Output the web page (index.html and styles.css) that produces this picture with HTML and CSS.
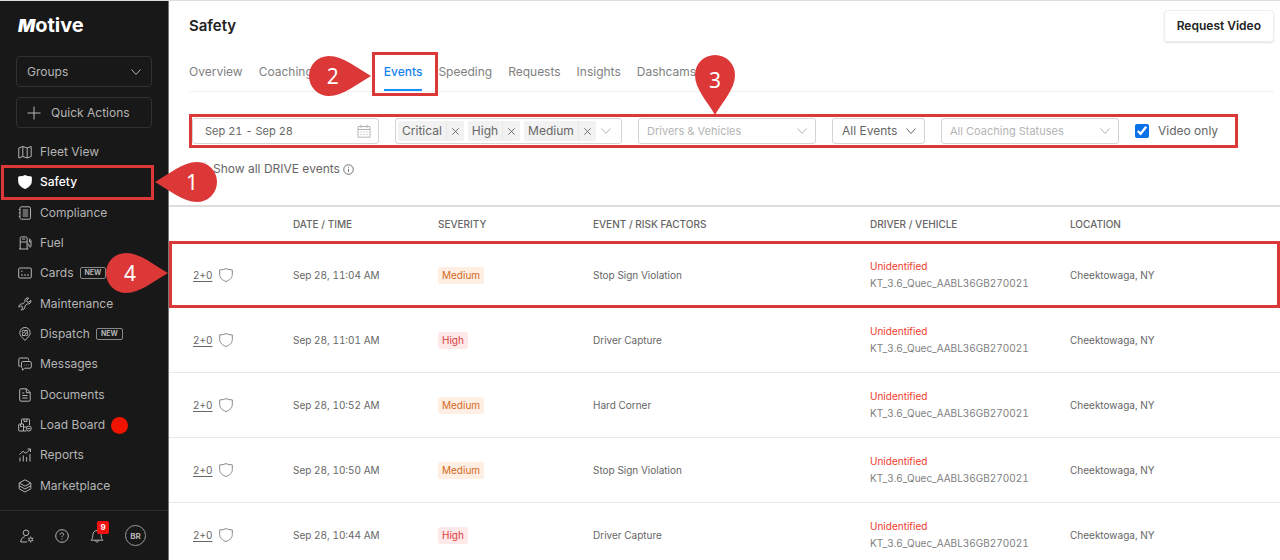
FILE: index.html
```html
<!DOCTYPE html>
<html lang="en">
<head>
    <meta charset="UTF-8">
    <meta name="viewport" content="width=device-width, initial-scale=1.0">
    <title>Safety - Events</title>
    <link rel="stylesheet" href="styles.css">
</head>
<body>
    <svg class="sprite" aria-hidden="true">
        <symbol id="chevron" viewBox="0 0 12 12"><path d="M1.5 3.5 6 8.5l4.5-5"/></symbol>
        <symbol id="close" viewBox="0 0 12 12"><path d="M2.5 2.5l7 7M9.5 2.5l-7 7"/></symbol>
        <symbol id="shield" viewBox="0 0 14 14"><path d="M7 .6C5.300 1.500 3.200 1.900.7 1.900v4.600c0 3.200 2.300 5.600 6.300 7 4-1.400 6.300-3.800 6.300-7V1.900C10.800 1.900 8.700 1.500 7 .6z"/></symbol>
        <symbol id="pointer" viewBox="0 0 62 40"><path d="M0 20C14 12 28 0 42 0a20 20 0 0 1 0 40C28 40 14 28 0 20z"/></symbol>
    </svg>

    <div class="app">
        <aside class="sidebar">
            <div class="logo"><span class="logo-m">M</span>otive</div>
            <div class="sidebar-actions">
                <div class="select-wrap">
                    <select class="side-control" aria-label="Groups"><option>Groups</option></select>
                    <svg class="icon chevron"><use href="#chevron"/></svg>
                </div>
                <button class="side-control quick-actions" type="button">
                    <svg class="icon" viewBox="0 0 14 14"><path d="M7 .5v13M.5 7h13"/></svg>
                    Quick Actions
                </button>
            </div>

            <nav class="nav">
                <div class="nav-item">
                    <a href="#"><svg class="icon" viewBox="0 0 14 14"><path d="M.8 3 4.800 1.500l4.400 1.500 4-1.500v10L9.200 13l-4.400-1.500-4 1.500zM4.800 1.500v10M9.200 3v10"/></svg>Fleet View</a>
                </div>
                <div class="nav-item active">
                    <a href="#"><svg class="icon filled"><use href="#shield"/></svg>Safety</a>
                    <span class="highlight"></span>
                    <span class="callout callout-left"><svg><use href="#pointer"/></svg><b>1</b></span>
                </div>
                <div class="nav-item">
                    <a href="#"><svg class="icon" viewBox="0 0 14 14"><rect x="2" y=".8" width="10.500" height="12.400" rx="1.500"/><path d="M4.700 4h5.500M4.700 6h5.500M4.700 8h5.500M4.700 10h5.500M.8 3.500H2M.8 7H2M.8 10.500H2"/></svg>Compliance</a>
                </div>
                <div class="nav-item">
                    <a href="#"><svg class="icon" viewBox="0 0 14 14"><path d="M2.200 13V2.200c0-.8.500-1.300 1.300-1.300h4.300c.8 0 1.300.5 1.300 1.300V13M1 13h9.400M2.200 6h7M4 3h3.200M9.200 8h1c.6 0 .9.400.9.900v1.300c0 1.300 1.900 1.300 1.900 0V4.500L11 2.300M13 6h-1.500V3.500"/></svg>Fuel</a>
                </div>
                <div class="nav-item">
                    <a href="#"><svg class="icon" viewBox="0 0 14 14"><rect x=".7" y="2" width="12.600" height="10" rx="1"/><path d="M3 5.200h1.500M3 9h2M6 9h2M9 9h2"/></svg>Cards<span class="tag-new">NEW</span></a>
                    <span class="callout callout-right"><svg><use href="#pointer"/></svg><b>4</b></span>
                </div>
                <div class="nav-item">
                    <a href="#"><svg class="icon" viewBox="0 0 14 14"><path d="M12.900 3.300 10.800 5.200 9 4.900 8.700 3.200 10.700 1C8.400.4 6.300 2.200 6.900 4.700L4.700 7C2.500 6.300.6 8 .9 10.200L2.600 9l1.600.500.3 1.600-1.400 1.800c2.300.3 4.200-1.500 3.700-3.800L9.200 6.900c2.300.5 4.200-1.200 3.700-3.600z"/></svg>Maintenance</a>
                </div>
                <div class="nav-item">
                    <a href="#"><svg class="icon" viewBox="0 0 14 14"><path d="M7 13.400C4 10.600 1.800 8.300 1.800 5.700a5.200 5.200 0 0 1 10.400 0c0 2.600-2.200 4.900-5.200 7.700z"/><circle cx="5.500" cy="4.500" r="1.300"/><circle cx="8.600" cy="7.300" r="1.300"/><path d="M6.800 3.500h2.500v2.500M4.500 6.500v2h2.800"/></svg>Dispatch<span class="tag-new">NEW</span></a>
                </div>
                <div class="nav-item">
                    <a href="#"><svg class="icon" viewBox="0 0 14 14"><path d="M2.500 9.200H.8V2.300c0-.8.500-1.300 1.300-1.300h7.100c.8 0 1.300.5 1.300 1.300v1.200M4.800 4.500h7.200c.8 0 1.300.5 1.300 1.300v4.100c0 .8-.5 1.300-1.300 1.300H6.700l-2.300 2V11.200c-.6-.2-.9-.6-.9-1.300V5.800c0-.8.5-1.300 1.300-1.300zM6.500 8h.6M8.200 8h.6M9.900 8h.6"/></svg>Messages</a>
                </div>
                <div class="nav-item">
                    <a href="#"><svg class="icon" viewBox="0 0 14 14"><path d="M3 .8h5.500l3.700 3.700v7.400c0 .8-.5 1.300-1.300 1.300H3c-.8 0-1.300-.5-1.300-1.300V2.100C1.700 1.300 2.200.8 3 .8zM8.300.8v3.900h3.900M4.300 5h2M4.300 7.500h5.300M4.300 10h5.300"/></svg>Documents</a>
                </div>
                <div class="nav-item">
                    <a href="#"><svg class="icon" viewBox="0 0 14 14"><path d="M3.500 6V2c0-.7.300-1 1-1h6c.7 0 1 .3 1 1v5M6 1v2.500h3V1M.7 12.500V7c0-.6.300-1 1-1h3.800v7H1.200zM2.500 6v2.500h2M5.500 9h3M5.500 13h3"/><circle cx="10.800" cy="10.500" r="2.500"/><path d="M9.500 10.500h2.600"/></svg>Load Board<span class="dot"></span></a>
                </div>
                <div class="nav-item">
                    <a href="#"><svg class="icon" viewBox="0 0 14 14"><path d="M2 13.500V9.500M5.300 13.500V7.500M8.600 13.500V9M12 13.500V6M1.500 6.500 5 3.300l3 2L12.300 1.200M9.500 1h3v3"/></svg>Reports</a>
                </div>
                <div class="nav-item">
                    <a href="#"><svg class="icon" viewBox="0 0 14 14"><path d="M7 .8 12.800 4 7 7.200 1.200 4zM1.200 6.800 7 10l5.800-3.200M1.200 9.800 7 13l5.800-3.200M1.200 4v5.800M12.800 4v5.800"/></svg>Marketplace</a>
                </div>
            </nav>

            <div class="sidebar-footer">
                <button type="button" aria-label="Account settings"><svg class="icon" viewBox="0 0 14 14"><circle cx="6" cy="3.800" r="2.800"/><path d="M7 13H.8c0-3 1.500-4.800 4-5.200"/><circle cx="10.700" cy="10.500" r="1.600"/><path d="M10.700 7.500v1.400M10.700 12.100v1.400M8.100 9l1.200.7M12.100 11.300l1.200.7M8.100 12l1.200-.7M12.100 9.700l1.200-.7"/></svg></button>
                <button type="button" aria-label="Help"><svg class="icon" viewBox="0 0 14 14"><circle cx="7" cy="7" r="6.300"/><path d="M5.200 5.600C5.300 3.300 8.800 3.500 8.700 5.500 8.600 6.700 7 6.700 7 8.200M7 9.500v1"/></svg></button>
                <button type="button" aria-label="Notifications"><svg class="icon" viewBox="0 0 14 14"><path d="M1 11.200h12c-1.200-1.200-1.800-2-1.800-4.700C11.200 3.300 9.500 1.500 7 1.500S2.800 3.300 2.800 6.500c0 2.700-.6 3.500-1.800 4.700zM5.300 11.500c.2 2 3.200 2 3.400 0"/></svg><span class="badge">9</span></button>
                <button class="avatar" type="button">BR</button>
            </div>
        </aside>

        <main class="main">
            <div class="content">
                <header class="page-header">
                    <h1>Safety</h1>
                    <button class="btn" type="button">Request Video</button>
                </header>

                <nav class="tabs">
                    <a href="#">Overview</a>
                    <a href="#">Coaching</a>
                    <a href="#" class="current">Events<span class="highlight"></span><span class="callout callout-right"><svg><use href="#pointer"/></svg><b>2</b></span></a>
                    <a href="#">Speeding</a>
                    <a href="#">Requests</a>
                    <a href="#">Insights</a>
                    <a href="#">Dashcams</a>
                </nav>

                <form class="filters">
                    <div class="select-wrap date">
                        <input class="control" type="text" value="Sep 21 - Sep 28" aria-label="Date range">
                        <svg class="icon calendar" viewBox="0 0 14 14"><path d="M1 2.500h12v10.700H1zM1 5.500h12M4 .8v3M10 .8v3M3.500 8h1M6.500 8h1M9.500 8h1M3.500 10.500h1M6.500 10.500h1M9.500 10.500h1"/></svg>
                    </div>
                    <div class="control multi">
                        <span class="chip">Critical<button type="button" aria-label="Remove Critical"><svg class="icon"><use href="#close"/></svg></button></span>
                        <span class="chip">High<button type="button" aria-label="Remove High"><svg class="icon"><use href="#close"/></svg></button></span>
                        <span class="chip">Medium<button type="button" aria-label="Remove Medium"><svg class="icon"><use href="#close"/></svg></button></span>
                        <svg class="icon chevron"><use href="#chevron"/></svg>
                    </div>
                    <div class="select-wrap wide">
                        <select class="control placeholder" aria-label="Drivers and vehicles"><option>Drivers &amp; Vehicles</option></select>
                        <svg class="icon chevron"><use href="#chevron"/></svg>
                        <span class="callout callout-down"><svg viewBox="0 0 40 60"><path d="M20 60C12 46 0 34 0 20a20 20 0 0 1 40 0C40 34 28 46 20 60z"/></svg><b>3</b></span>
                    </div>
                    <div class="select-wrap narrow">
                        <select class="control" aria-label="Events"><option>All Events</option></select>
                        <svg class="icon chevron"><use href="#chevron"/></svg>
                    </div>
                    <div class="select-wrap wide">
                        <select class="control placeholder" aria-label="Coaching status"><option>All Coaching Statuses</option></select>
                        <svg class="icon chevron"><use href="#chevron"/></svg>
                    </div>
                    <label class="check"><input type="checkbox" checked>Video only</label>
                    <span class="highlight"></span>
                </form>

                <label class="check show-all"><input type="checkbox">Show all DRIVE events
                    <svg class="icon" viewBox="0 0 12 12"><circle cx="6" cy="6" r="5.200"/><path d="M6 5.300v3.500M6 3v1"/></svg>
                </label>
            </div>

            <table class="events">
                <colgroup>
                    <col class="col-media"><col class="col-date"><col class="col-severity"><col><col class="col-driver"><col class="col-location">
                </colgroup>
                <thead>
                    <tr><th></th><th>DATE / TIME</th><th>SEVERITY</th><th>EVENT / RISK FACTORS</th><th>DRIVER / VEHICLE</th><th>LOCATION</th></tr>
                </thead>
                <tbody>
                    <tr>
                        <td><div class="media"><a href="#">2+0</a><svg class="icon"><use href="#shield"/></svg></div><span class="highlight"></span></td>
                        <td>Sep 28, 11:04 AM</td>
                        <td><span class="severity medium">Medium</span></td>
                        <td>Stop Sign Violation</td>
                        <td><span class="unidentified">Unidentified</span><span class="vehicle">KT_3.6_Quec_AABL36GB270021</span></td>
                        <td>Cheektowaga, NY</td>
                    </tr>
                    <tr>
                        <td><div class="media"><a href="#">2+0</a><svg class="icon"><use href="#shield"/></svg></div></td>
                        <td>Sep 28, 11:01 AM</td>
                        <td><span class="severity high">High</span></td>
                        <td>Driver Capture</td>
                        <td><span class="unidentified">Unidentified</span><span class="vehicle">KT_3.6_Quec_AABL36GB270021</span></td>
                        <td>Cheektowaga, NY</td>
                    </tr>
                    <tr>
                        <td><div class="media"><a href="#">2+0</a><svg class="icon"><use href="#shield"/></svg></div></td>
                        <td>Sep 28, 10:52 AM</td>
                        <td><span class="severity medium">Medium</span></td>
                        <td>Hard Corner</td>
                        <td><span class="unidentified">Unidentified</span><span class="vehicle">KT_3.6_Quec_AABL36GB270021</span></td>
                        <td>Cheektowaga, NY</td>
                    </tr>
                    <tr>
                        <td><div class="media"><a href="#">2+0</a><svg class="icon"><use href="#shield"/></svg></div></td>
                        <td>Sep 28, 10:50 AM</td>
                        <td><span class="severity medium">Medium</span></td>
                        <td>Stop Sign Violation</td>
                        <td><span class="unidentified">Unidentified</span><span class="vehicle">KT_3.6_Quec_AABL36GB270021</span></td>
                        <td>Cheektowaga, NY</td>
                    </tr>
                    <tr>
                        <td><div class="media"><a href="#">2+0</a><svg class="icon"><use href="#shield"/></svg></div></td>
                        <td>Sep 28, 10:44 AM</td>
                        <td><span class="severity high">High</span></td>
                        <td>Driver Capture</td>
                        <td><span class="unidentified">Unidentified</span><span class="vehicle">KT_3.6_Quec_AABL36GB270021</span></td>
                        <td>Cheektowaga, NY</td>
                    </tr>
                </tbody>
            </table>
        </main>
    </div>
</body>
</html>
```

FILE: styles.css
```css
* {
    box-sizing: border-box;
}
body {
    font-family: Inter, "Liberation Sans", sans-serif;
    font-size: 12px;
    line-height: 20px;
    margin: 0;
    color: #666;
    background-color: #fff;
}
a {
    color: inherit;
    text-decoration: none;
}
button, input, select {
    font: inherit;
    color: inherit;
    margin: 0;
}
button {
    padding: 0;
    border: none;
    background: none;
    cursor: pointer;
}
.sprite {
    display: none;
}
.icon {
    width: 14px;
    height: 14px;
    flex: none;
    fill: none;
    stroke: currentColor;
    stroke-width: 1;
}
.icon.filled {
    fill: currentColor;
}
.app {
    display: flex;
    height: 100vh;
    border-top: 1px solid #ddd;
}

/* sidebar */
.sidebar {
    position: relative;
    z-index: 2;
    display: flex;
    flex-direction: column;
    flex: none;
    width: 169px;
    background-color: #181818;
    border-right: 1px solid #777;
    color: #b4b4b4;
}
.logo {
    padding: 12px 18px 0;
    font-size: 20px;
    line-height: 24px;
    font-weight: 700;
    color: #fff;
}
.logo-m {
    font-size: 18px;
    font-weight: 900;
    font-style: italic;
}
.sidebar-actions {
    display: flex;
    flex-direction: column;
    gap: 10px;
    padding: 18px 16px 9px;
}
.select-wrap {
    position: relative;
}
.select-wrap .icon {
    position: absolute;
    right: 8px;
    top: 50%;
    transform: translateY(-50%);
    pointer-events: none;
}
.chevron {
    width: 12px;
    height: 12px;
}
.side-control {
    display: flex;
    align-items: center;
    gap: 10px;
    width: 100%;
    height: 31px;
    padding: 0 10px;
    border: 1px solid #303030;
    border-radius: 4px;
    background-color: transparent;
    appearance: none;
}
.sidebar .select-wrap .chevron {
    right: 10px;
}
.nav {
    display: flex;
    flex-direction: column;
    flex: 1;
    padding-bottom: 9px;
}
.nav-item {
    position: relative;
    display: flex;
    align-items: center;
    flex: 1;
}
.nav-item a {
    display: flex;
    align-items: center;
    padding-left: 18px;
}
.nav-item .icon {
    margin-right: 8px;
}
.nav-item.active {
    color: #fff;
    font-weight: 500;
}
.tag-new {
    margin-left: 6px;
    padding: 0 4px;
    border: 1px solid #888;
    border-radius: 2px;
    font-size: 7px;
    line-height: 10px;
    font-weight: 700;
}
.dot {
    width: 17px;
    height: 17px;
    margin-left: 6px;
    border-radius: 50%;
    background-color: #f01400;
}
.sidebar-footer {
    display: flex;
    align-items: center;
    gap: 21px;
    height: 50px;
    padding-left: 20px;
    border-top: 1px solid #2c2c2c;
}
.sidebar-footer button {
    position: relative;
    display: flex;
}
.badge {
    position: absolute;
    left: 7px;
    top: -8px;
    width: 12px;
    border-radius: 2px;
    background-color: #f01010;
    color: #fff;
    font-size: 8px;
    line-height: 13px;
    font-weight: 700;
    text-align: center;
}
.sidebar-footer .avatar {
    align-items: center;
    justify-content: center;
    width: 21px;
    height: 21px;
    border: 1px solid #999;
    border-radius: 50%;
    font-size: 8px;
    font-weight: 700;
}

/* page header and tabs */
.main {
    flex: 1;
    min-width: 0;
    overflow: hidden;
}
.content {
    padding: 9px 6px 0 20px;
}
.page-header {
    display: flex;
    align-items: center;
    justify-content: space-between;
}
h1 {
    margin: 0;
    font-size: 15px;
    font-weight: 600;
    color: #222;
}
.btn {
    height: 32px;
    padding: 0 12px;
    border: 1px solid #eee;
    border-radius: 4px;
    box-shadow: 0 1px 2px rgba(0, 0, 0, 0.12);
    color: #222;
    font-weight: 600;
}
.tabs {
    display: flex;
    gap: 16px;
    padding-top: 20px;
    border-bottom: 1px solid #f0f0f0;
    color: #808080;
}
.tabs a {
    position: relative;
    padding-bottom: 7px;
    border-bottom: 2px solid transparent;
}
.tabs .current {
    margin-left: 55px;
    color: #1583f0;
    border-bottom-color: #1890ff;
    font-weight: 500;
}

/* filters */
.filters {
    position: relative;
    display: flex;
    gap: 16px;
    width: fit-content;
    margin-top: 22px;
    padding: 4px 20px 4px 3px;
}
.control {
    width: 100%;
    height: 26px;
    padding: 0 9px;
    border: 1px solid #d4d4d4;
    border-radius: 3px;
    background-color: #fff;
    appearance: none;
}
.date {
    width: 187px;
}
.date .control {
    padding-left: 12px;
    font-size: 11px;
    font-variant-numeric: tabular-nums;
}
.wide {
    width: 178px;
}
.narrow {
    width: 93px;
}
.placeholder {
    padding: 0 8px;
    color: #b4b4b4;
    font-size: 11px;
}
.filters .calendar, .placeholder + .chevron, .multi > .chevron {
    color: #b4b4b4;
}
.multi {
    display: flex;
    align-items: center;
    gap: 4px;
    width: 227px;
    padding: 0 2px;
}
.chip {
    display: flex;
    padding-left: 4px;
    border-radius: 2px;
    background-color: #f2f2f2;
}
.chip button {
    display: flex;
    align-items: center;
    margin-left: 4px;
    padding: 0 3px;
    border-left: 1px solid #e8e8e8;
}
.chip .icon {
    width: 11px;
    height: 11px;
}
.check {
    display: flex;
    align-items: center;
}
.check input {
    width: 14px;
    height: 14px;
    margin-right: 9px;
    accent-color: #0a72e8;
}
.show-all {
    width: fit-content;
    margin-top: 11px;
    padding-left: 4px;
}
.show-all input {
    margin-right: 6px;
    appearance: none;
    border: 1px solid #ddd;
    border-radius: 2px;
}
.show-all .icon {
    width: 11px;
    height: 11px;
    margin-left: 3px;
}

/* events table */
.events {
    width: 100%;
    margin-top: 26px;
    border-top: 2px solid #ddd;
    border-spacing: 0;
    table-layout: fixed;
    font-size: 10px;
    line-height: 17px;
    font-variant-numeric: tabular-nums;
}
.col-media {
    width: 124px;
}
.col-date {
    width: 145px;
}
.col-severity {
    width: 155px;
}
.col-driver {
    width: 200px;
}
.col-location {
    width: 210px;
}
.events tr {
    position: relative;
}
.events th {
    height: 36px;
    padding: 0 0 2px;
    font-weight: 500;
    text-align: left;
}
.events td {
    height: 65px;
    padding: 0;
    border-bottom: 1px solid #eaeaea;
}
.media {
    display: flex;
    align-items: center;
    gap: 7px;
    padding-left: 24px;
}
.media a {
    text-decoration: underline;
    text-underline-offset: 2px;
}
.media .icon {
    color: #888;
}
.severity {
    display: inline-block;
    padding: 0 4px;
    border-radius: 3px;
}
.medium {
    background-color: #ffeee2;
    color: #d4691e;
}
.high {
    background-color: #ffe8e8;
    color: #d84040;
}
.unidentified, .vehicle {
    display: block;
}
.unidentified {
    color: #f0392b;
}
.vehicle {
    color: #808080;
}

/* numbered callouts and the boxes they point at */
.highlight {
    position: absolute;
    inset: 0;
    border: 3px solid #dc3838;
    pointer-events: none;
}
.nav-item .highlight {
    inset: -2px 14px -2px 1px;
}
.tabs .highlight {
    inset: -10px -16px -7px -12px;
}
.events .highlight {
    inset: -2px 0 0;
}
.callout {
    position: absolute;
    top: 50%;
    display: flex;
    align-items: center;
    justify-content: center;
    width: 62px;
    height: 40px;
    transform: translateY(-50%);
    color: #fff;
    pointer-events: none;
}
.callout svg {
    position: absolute;
    inset: 0;
    width: 100%;
    height: 100%;
    fill: #dc3838;
}
.callout b {
    position: relative;
    font-family: "Noto Sans", sans-serif;
    font-size: 21px;
    font-weight: 400;
}
.callout-left {
    left: 155px;
    padding-left: 12px;
}
.callout-right {
    right: 0;
    padding-right: 14px;
}
.callout-right svg {
    transform: scaleX(-1);
}
.tabs .callout {
    right: calc(100% + 13px);
}
.callout-down {
    top: auto;
    bottom: calc(100% + 3px);
    left: 57px;
    width: 40px;
    height: 60px;
    padding-bottom: 10px;
    transform: none;
}
```
